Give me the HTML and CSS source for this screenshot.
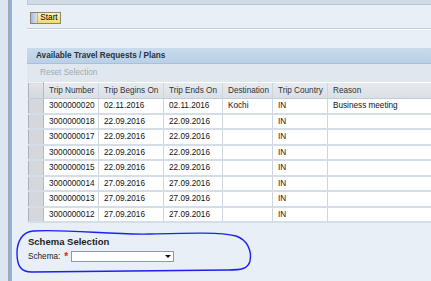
FILE: index.html
```html
<!DOCTYPE html>
<html lang="en">
  <head>
    <meta charset="utf-8">
    <title>Travel Requests</title>
    <link rel="stylesheet" href="styles.css">
  </head>
  <body>
    <div class="desk"></div>
    <div class="rail"></div>

    <div class="content">
      <!-- barra superior -->
      <div class="topbar"></div>

      <div class="actions">
        <button class="btn-start"><span class="btn-cap"></span><span class="btn-label">Start</span></button>
      </div>
      <div class="separator"></div>

      <!-- Panel de solicitudes -->
      <div class="panel">
        <div class="panel-title">Available Travel Requests / Plans</div>
        <div class="toolbar"><span class="tool-disabled">Reset Selection</span></div>
        <table class="grid">
          <colgroup>
            <col class="c-sel"><col class="c-num"><col class="c-begin"><col class="c-end"><col class="c-dest"><col class="c-country"><col class="c-reason">
          </colgroup>
          <thead>
            <tr>
              <th class="sel"></th>
              <th>Trip Number</th>
              <th>Trip Begins On</th>
              <th>Trip Ends On</th>
              <th>Destination</th>
              <th>Trip Country</th>
              <th>Reason</th>
            </tr>
          </thead>
          <tbody>
            <tr><td class="sel"></td><td>3000000020</td><td>02.11.2016</td><td>02.11.2016</td><td>Kochi</td><td>IN</td><td>Business meeting</td></tr>
            <tr><td class="sel"></td><td>3000000018</td><td>22.09.2016</td><td>22.09.2016</td><td></td><td>IN</td><td></td></tr>
            <tr><td class="sel"></td><td>3000000017</td><td>22.09.2016</td><td>22.09.2016</td><td></td><td>IN</td><td></td></tr>
            <tr><td class="sel"></td><td>3000000016</td><td>22.09.2016</td><td>22.09.2016</td><td></td><td>IN</td><td></td></tr>
            <tr><td class="sel"></td><td>3000000015</td><td>22.09.2016</td><td>22.09.2016</td><td></td><td>IN</td><td></td></tr>
            <tr><td class="sel"></td><td>3000000014</td><td>27.09.2016</td><td>27.09.2016</td><td></td><td>IN</td><td></td></tr>
            <tr><td class="sel"></td><td>3000000013</td><td>27.09.2016</td><td>27.09.2016</td><td></td><td>IN</td><td></td></tr>
            <tr><td class="sel"></td><td>3000000012</td><td>27.09.2016</td><td>27.09.2016</td><td></td><td>IN</td><td></td></tr>
          </tbody>
        </table>
      </div>

      <!-- Selección de esquema -->
      <div class="schema">
        <div class="schema-title">Schema Selection</div>
        <div class="schema-row">
          <span class="schema-label">Schema:</span>
          <span class="required">*</span>
          <span class="dropdown"><span class="arrow"></span></span>
        </div>
      </div>
    </div>

    <!-- marca a mano -->
    <svg class="scribble" width="431" height="281" viewBox="0 0 431 281">
      <path d="M 33 231 C 70 229, 110 235, 150 234 C 190 233, 220 232, 236 236 C 248 240, 252 252, 250 261 C 248 269, 241 270, 228 270 C 170 271, 90 271, 32 272 C 20 272, 17 265, 17 253 C 17 242, 22 232, 33 231 Z"/>
    </svg>
  </body>
</html>
```

FILE: styles.css
```css
/* Estilo general */
body {
  margin: 0;
  height: 281px;
  overflow: hidden;
  display: flex;
  font-family: "Liberation Sans", Arial, sans-serif;
  font-size: 8.2px;
  background: #e8eff7;
  color: #111;
  position: relative;
}

.desk {
  width: 8px;
  background: #dbe6f2;
}

.rail {
  width: 2px;
  background: #a3a7ab;
  border-right: 2px solid #8fb2da;
}

.content {
  flex: 1;
  min-width: 0;
  padding-left: 15px;
  overflow: hidden;
}

/* Barra superior */
.topbar {
  height: 4px;
  background: #cfdbe7;
  border-bottom: 1px solid #b9c8d6;
  border-left: 1px solid #b9c8d6;
}

.actions {
  padding: 7px 0 0 3px;
  height: 12px;
}

.btn-start {
  display: flex;
  width: 31px;
  height: 12px;
  padding: 0;
  margin: 0;
  border: 1px solid #86857a;
  background: linear-gradient(#fdf1b4, #f5d971);
  font: inherit;
  color: #000;
  cursor: pointer;
}

.btn-cap {
  width: 6px;
  height: 100%;
  background: linear-gradient(90deg, #a8bcd4, #d7e1ec);
  border-right: 1px solid #b8b8a0;
}

.btn-label {
  flex: 1;
  line-height: 10px;
  text-align: center;
}

.separator {
  margin-top: 4px;
  height: 1px;
  background: #c1cfdb;
  border-bottom: 1px solid #ffffff;
}

/* Panel */
.panel {
  margin-top: 18px;
}

.panel-title {
  height: 15px;
  line-height: 15px;
  padding-left: 9px;
  font-weight: bold;
  color: #22323f;
  background: linear-gradient(#c9dbed, #bad0e6);
  border-bottom: 1px solid #a9c0d8;
}

.toolbar {
  height: 18px;
  padding-left: 13px;
  background: #dfe7ef;
}

.tool-disabled {
  display: inline-block;
  margin-top: 4px;
  line-height: 10px;
  color: #a3aab2;
}

/* Tabla */
.grid {
  width: 405px;
  table-layout: fixed;
  border-collapse: collapse;
  margin-left: 1px;
  background: #ffffff;
}

.c-sel { width: 15px; }
.c-num { width: 55px; }
.c-begin { width: 65px; }
.c-end { width: 59px; }
.c-dest { width: 50px; }
.c-country { width: 55px; }

.grid th,
.grid td {
  padding: 0 0 0 5px;
  text-align: left;
  white-space: nowrap;
  overflow: hidden;
  border-right: 1px solid #cdd6e0;
}

.grid th {
  height: 14.5px;
  font-weight: normal;
  color: #333;
  background: linear-gradient(#e6eaef, #dadfe5);
  border-bottom: 1px solid #c3ccd6;
}

.grid td {
  height: 15.5px;
  box-sizing: border-box;
  color: #111;
  border-bottom: 2px solid #d5dde7;
}

.grid .sel {
  padding: 0;
  background: #d4d7db;
  border-top: 1px solid #eef0f2;
  border-left: 1px solid #a9b0b8;
  border-right: 1px solid #b3b9c0;
}

.grid th.sel {
  background: linear-gradient(#e0e4e9, #d3d8de);
}

/* Selección de esquema */
.schema {
  padding: 13px 0 0 1px;
}

.schema-title {
  font-size: 9.5px;
  font-weight: bold;
  line-height: 12px;
  color: #1e1e1e;
}

.schema-row {
  display: flex;
  align-items: center;
  margin-top: 3px;
  height: 11px;
}

.schema-label {
  color: #222;
}

.required {
  color: #e02020;
  margin-left: 4px;
  margin-right: 3px;
  font-size: 10px;
  font-weight: bold;
}

.dropdown {
  position: relative;
  width: 103px;
  height: 11px;
  box-sizing: border-box;
  background: #ffffff;
  border: 1px solid #8d9aa6;
}

.arrow {
  position: absolute;
  right: 2px;
  top: 3px;
  border-left: 3px solid transparent;
  border-right: 3px solid transparent;
  border-top: 3px solid #111;
}

/* Trazo azul */
.scribble {
  position: absolute;
  left: 0;
  top: 0;
  pointer-events: none;
}

.scribble path {
  fill: none;
  stroke: #1a22f0;
  stroke-width: 1.4;
  stroke-linejoin: round;
}
```
